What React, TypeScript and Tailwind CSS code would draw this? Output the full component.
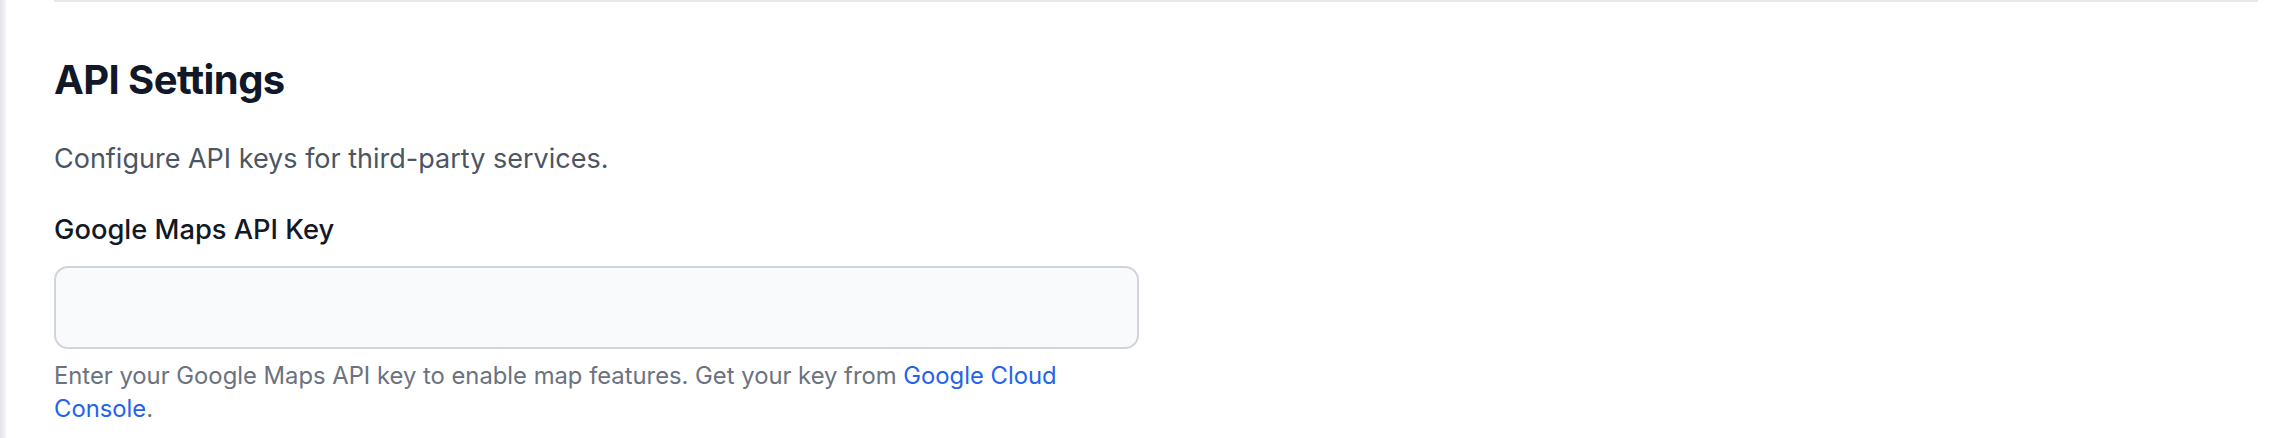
import React from "react";

export default function App() {
  return (
    <div
      className="flex h-[438px] w-full bg-white"
      style={{ fontFamily: "Inter, 'Noto Sans', sans-serif" }}
    >
      <div className="w-[6px] shrink-0 bg-gradient-to-r from-[#e3e4e8] to-[#f7f7f9]" />
      <div className="flex-1 pl-[48px] pr-[16px]">
        <div className="border-t-2 border-[#e5e7eb]">
          <h2 className="mt-[50px] text-[40px] font-bold leading-[56px] text-[#111827] tracking-[-0.6px]">
            API Settings
          </h2>
          <p className="mt-[30px] text-[27px] leading-[42px] text-[#4b5563]">
            Configure API keys for third-party services.
          </p>
          <div className="mt-[32px] w-[1085px]">
            <label className="block text-[27.3px] font-medium leading-[36px] text-[#111827]">
              Google Maps API Key
            </label>
            <input
              type="text"
              className="mt-[18px] block h-[83px] w-full rounded-[14px] border-2 border-[#d1d5db] bg-[#f9fafb] px-[21px] text-[24.5px] outline-none"
            />
            <p className="mt-[10px] text-[23.8px] leading-[33px] text-[#6b7280]">
              Enter your Google Maps API key to enable map features. Get your key from{" "}
              <a href="#" className="text-[#2563eb]">
                Google Cloud Console
              </a>
              .
            </p>
          </div>
        </div>
      </div>
    </div>
  );
}
